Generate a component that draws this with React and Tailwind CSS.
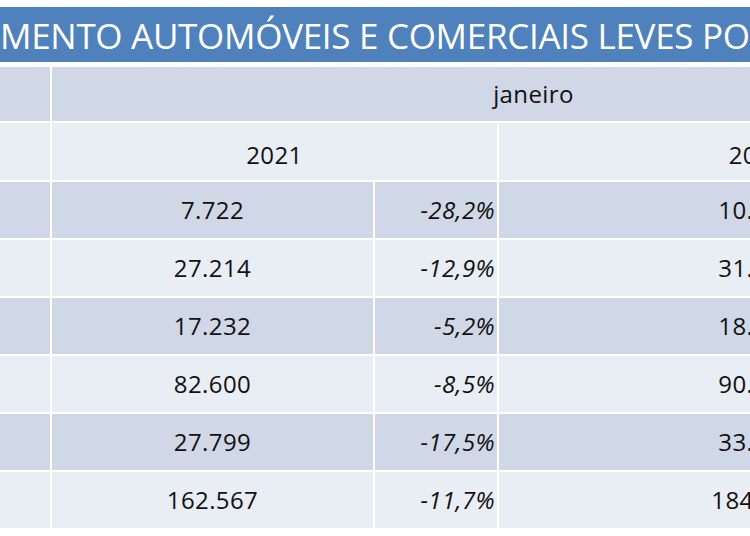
const rows = [
  { v21: '7.722', pct: '-28,2%', v22: '10.755', dark: true },
  { v21: '27.214', pct: '-12,9%', v22: '31.244', dark: false },
  { v21: '17.232', pct: '-5,2%', v22: '18.177', dark: true },
  { v21: '82.600', pct: '-8,5%', v22: '90.273', dark: false },
  { v21: '27.799', pct: '-17,5%', v22: '33.696', dark: true },
  { v21: '162.567', pct: '-11,7%', v22: '184.107', dark: false },
];

const font = { fontFamily: '"Open Sans", "Liberation Sans", sans-serif' };

export default function App() {
  return (
    <div className="w-[750px] h-[536px] overflow-hidden bg-white" style={font}>
      <div className="pt-[7px]">
        <div className="h-[55px] bg-[#4f81bd] flex items-center overflow-hidden">
          <span className="whitespace-nowrap text-white text-[35px] tracking-[-0.3px] leading-none pt-[1px]">
            MENTO AUTOMÓVEIS E COMERCIAIS LEVES POR REGIÃO
          </span>
        </div>
      </div>
      <div className="mt-[5px] grid grid-cols-[50px_321px_122px_516px] gap-[2px] bg-white text-[24px] tracking-[0.4px] text-[#111]">
        <div className="h-[54px] bg-[#d0d8e8]" />
        <div className="h-[54px] bg-[#d0d8e8] col-span-3 flex items-center justify-center">
          janeiro
        </div>

        <div className="h-[57px] bg-[#e9edf4]" />
        <div className="h-[57px] bg-[#e9edf4] col-span-2 flex items-center justify-center pt-[6px]">
          2021
        </div>
        <div className="h-[57px] bg-[#e9edf4] flex items-center justify-center pt-[6px]">2022</div>

        {rows.map((r) => {
          const bg = r.dark ? 'bg-[#d0d8e8]' : 'bg-[#e9edf4]';
          return (
            <div key={r.v21} className="contents">
              <div className={`h-[56px] ${bg}`} />
              <div className={`h-[56px] ${bg} flex items-center justify-center`}>{r.v21}</div>
              <div className={`h-[56px] ${bg} flex items-center justify-end pr-[2px] italic`}>{r.pct}</div>
              <div className={`h-[56px] ${bg} flex items-center justify-center`}>{r.v22}</div>
            </div>
          );
        })}
      </div>
    </div>
  );
}
